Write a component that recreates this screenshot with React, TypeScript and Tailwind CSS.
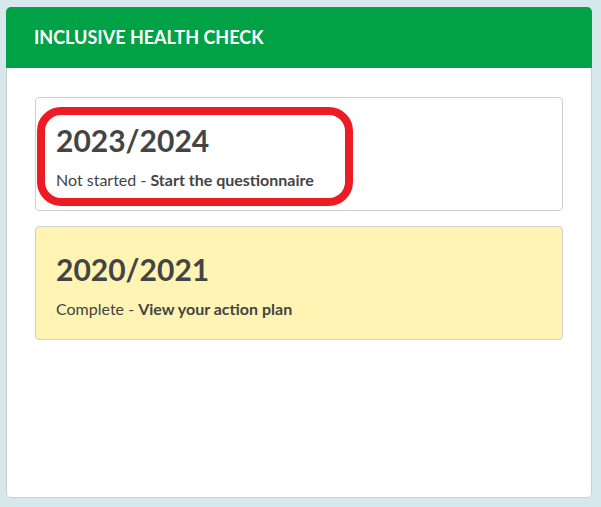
import React from 'react';

const checks = [
  { year: '2023/2024', status: 'Not started', action: 'Start the questionnaire', highlight: true, done: false },
  { year: '2020/2021', status: 'Complete', action: 'View your action plan', highlight: false, done: true },
];

export default function App() {
  return (
    <div className="min-h-[507px] bg-[#d7e8ec] pt-[7px] pl-[6px] pr-[9px] pb-[9px] font-['Lato',sans-serif] text-[#444]">
      <div className="flex flex-col rounded-[5px] overflow-hidden">
        {/* Header */}
        <div className="bg-[#00a245] h-[61px] flex items-center px-[28px]">
          <h1 className="text-white font-bold text-[18px]">INCLUSIVE HEALTH CHECK</h1>
        </div>

        {/* Body */}
        <div className="bg-white border border-t-0 border-[#cfcfcf] rounded-b-[5px] h-[430px] px-[28px] pt-[29px] flex flex-col gap-[15px]">
          {checks.map((c) => (
            <div
              key={c.year}
              className={`relative h-[114px] rounded-[4px] border border-[#cfcfcf] px-[20px] pt-[24px] ${c.done ? 'bg-[#fff4b3]' : 'bg-white'}`}
            >
              <h2 className="font-bold text-[30px] leading-[36px]">{c.year}</h2>
              <p className="mt-[12px] text-[16px] leading-[20px]">
                {c.status} - <a className="font-bold">{c.action}</a>
              </p>
              {c.highlight && (
                <div className="absolute left-[1px] top-[9px] w-[316px] h-[99px] rounded-[24px] border-[8px] border-[#ec1c24] pointer-events-none" />
              )}
            </div>
          ))}
        </div>
      </div>
    </div>
  );
}
